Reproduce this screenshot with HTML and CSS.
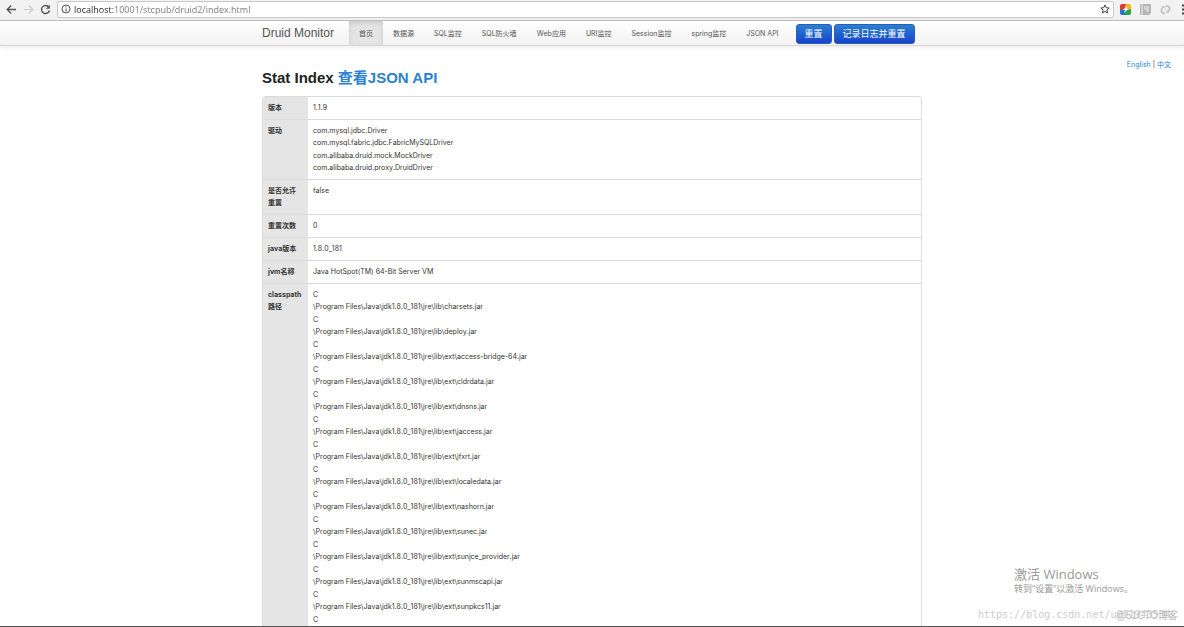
FILE: index.html
```html
<!DOCTYPE html>
<html lang="zh-CN">
<head>
<meta charset="utf-8">
<title>Druid Stat Index</title>
<link rel="stylesheet" href="styles.css">
</head>
<body>
<div class="browser">
  <button class="tool" type="button" aria-label="Back"><svg width="11" height="11" viewBox="0 0 11 11"><path d="M10 5.5H1.5M5.2 1.5l-4 4 4 4" fill="none" stroke="#555" stroke-width="1.4"/></svg></button>
  <button class="tool" type="button" aria-label="Forward"><svg width="11" height="11" viewBox="0 0 11 11"><path d="M1 5.5h8.5M5.8 1.5l4 4-4 4" fill="none" stroke="#ccc" stroke-width="1.2"/></svg></button>
  <button class="tool" type="button" aria-label="Reload"><svg width="11" height="11" viewBox="0 0 11 11"><path d="M8.8 3.2A4 4 0 1 0 9.4 6.5" fill="none" stroke="#555" stroke-width="1.4"/><path d="M9.8 .8v4H5.8z" fill="#555"/></svg></button>
  <div class="address">
    <svg width="10" height="10" viewBox="0 0 10 10"><circle cx="5" cy="5" r="4" fill="none" stroke="#555"/><path d="M5 4.5v3M5 2.4v1.2" stroke="#555" stroke-width="1.1"/></svg>
    <input class="url" type="text" aria-label="Address" value="localhost:10001/stcpub/druid2/index.html">
    <button class="star" type="button" aria-label="Bookmark"><svg width="10" height="10" viewBox="0 0 10 10"><path d="M5 .9l1.2 2.8 3 .3-2.3 2 .7 3L5 7.4 2.4 9l.7-3-2.3-2 3-.3z" fill="none" stroke="#444" stroke-width="1"/></svg></button>
  </div>
  <div class="extensions">
    <svg width="11" height="11" viewBox="0 0 11 11"><path d="M0 2q0-2 2-2h4L5 5 0 7z" fill="#e33a2b"/><path d="M6 0h3q2 0 2 2v4L6 4z" fill="#f6b913"/><path d="M0 6l5-1 1 6H2q-2 0-2-2z" fill="#2474d8"/><path d="M5 6l6-1v4q0 2-2 2H5z" fill="#2ba24c"/><path d="M7 2L3 6h2L4 9l4-4H6z" fill="#fff"/></svg>
    <svg width="11" height="11" viewBox="0 0 11 11"><path d="M0 0h11v9l-2 2H0z" fill="#b5b5b5"/><path d="M2 0v11M4 3h5M4 5h5M6 7h3" stroke="#eee"/></svg>
    <svg width="11" height="11" viewBox="0 0 11 11"><path d="M5 9.500C1 9 0 5 4 2.500M6 1.500c4 .5 5 4.500 1 7" fill="none" stroke="#c8c8c8" stroke-width="2"/><path d="M2 2.500h3v3M9 8.500H6.500v-3" fill="none" stroke="#c8c8c8"/></svg>
    <svg width="5" height="11" viewBox="0 0 5 11"><path d="M2 1.500h3M2 5.500h3M2 9.500h3" stroke="#444" stroke-width="2"/></svg>
  </div>
</div>
<header class="navbar">
  <div class="container bar">
    <a class="brand" href="#">Druid Monitor</a>
    <nav class="menu">
      <a class="item active" href="#">首页</a>
      <a class="item" href="#">数据源</a>
      <a class="item" href="#">SQL监控</a>
      <a class="item" href="#">SQL防火墙</a>
      <a class="item" href="#">Web应用</a>
      <a class="item" href="#">URI监控</a>
      <a class="item" href="#">Session监控</a>
      <a class="item" href="#">spring监控</a>
      <a class="item" href="#">JSON API</a>
    </nav>
    <div class="actions">
      <button class="btn" type="button">重置</button>
      <button class="btn" type="button">记录日志并重置</button>
    </div>
  </div>
</header>
<div class="languages"><a href="#">English</a> | <a href="#">中文</a></div>
<main class="container">
  <h1 class="title">Stat Index <a href="#">查看JSON API</a></h1>
  <table class="stats">
    <tbody>
      <tr><th scope="row">版本</th><td><p>1.1.9</p></td></tr>
      <tr><th scope="row">驱动</th><td><p>com.mysql.jdbc.Driver<br>com.mysql.fabric.jdbc.FabricMySQLDriver</p><p>com.alibaba.druid.mock.MockDriver<br>com.alibaba.druid.proxy.DruidDriver</p></td></tr>
      <tr><th scope="row"><p>是否允许<br>重置</p></th><td><p>false</p></td></tr>
      <tr><th scope="row">重置次数</th><td><p>0</p></td></tr>
      <tr><th scope="row">java版本</th><td><p>1.8.0_181</p></td></tr>
      <tr><th scope="row">jvm名称</th><td><p>Java HotSpot(TM) 64-Bit Server VM</p></td></tr>
      <tr><th scope="row">classpath<br>路径</th><td>
        <p>C<br>\Program Files\Java\jdk1.8.0_181\jre\lib\charsets.jar</p>
        <p>C<br>\Program Files\Java\jdk1.8.0_181\jre\lib\deploy.jar</p>
        <p>C<br>\Program Files\Java\jdk1.8.0_181\jre\lib\ext\access-bridge-64.jar</p>
        <p>C<br>\Program Files\Java\jdk1.8.0_181\jre\lib\ext\cldrdata.jar</p>
        <p>C<br>\Program Files\Java\jdk1.8.0_181\jre\lib\ext\dnsns.jar</p>
        <p>C<br>\Program Files\Java\jdk1.8.0_181\jre\lib\ext\jaccess.jar</p>
        <p>C<br>\Program Files\Java\jdk1.8.0_181\jre\lib\ext\jfxrt.jar</p>
        <p>C<br>\Program Files\Java\jdk1.8.0_181\jre\lib\ext\localedata.jar</p>
        <p>C<br>\Program Files\Java\jdk1.8.0_181\jre\lib\ext\nashorn.jar</p>
        <p>C<br>\Program Files\Java\jdk1.8.0_181\jre\lib\ext\sunec.jar</p>
        <p>C<br>\Program Files\Java\jdk1.8.0_181\jre\lib\ext\sunjce_provider.jar</p>
        <p>C<br>\Program Files\Java\jdk1.8.0_181\jre\lib\ext\sunmscapi.jar</p>
        <p>C<br>\Program Files\Java\jdk1.8.0_181\jre\lib\ext\sunpkcs11.jar</p>
        <p>C</p>
      </td></tr>
    </tbody>
  </table>
</main>
<div class="activation"><div class="activation-title">激活 Windows</div><div class="activation-text">转到“设置”以激活 Windows。</div></div>
<div class="blog-mark">https://blog.csdn.net/u011943534</div>
<div class="site-mark">@51CTO博客</div>
</body>
</html>
```
FILE: styles.css
```css
* { box-sizing: border-box; }
body {
  margin: 0;
  height: 100vh;
  overflow: hidden;
  display: flex;
  flex-direction: column;
  position: relative;
  background: #fff;
  border-bottom: 1px solid #555;
  color: #333;
  font: 7px/12px Inter, "Liberation Sans", "Noto Sans CJK SC", sans-serif;
  font-kerning: none;
}
a { color: #2a82d0; text-decoration: none; }
p { margin: 0; padding-bottom: 1px; }
svg { display: block; flex: none; }
button { font: inherit; border: 0; padding: 0; background: none; }

.browser {
  flex: none;
  display: flex;
  align-items: center;
  gap: 6px;
  height: 21px;
  padding: 0 0 2px 6px;
  background: #f2f2f2;
  border-bottom: 1px solid #c4c4c4;
}
.address {
  flex: 1;
  display: flex;
  align-items: center;
  gap: 3px;
  height: 17px;
  padding: 0 3px;
  background: #fff;
  border: 1px solid #c8c8c8;
  border-radius: 2px;
}
.url {
  flex: 1;
  min-width: 0;
  height: 15px;
  padding: 0;
  border: 0;
  font: 9px/15px "Open Sans", "Noto Sans", sans-serif;
  color: transparent;
  background: linear-gradient(90deg, #222 39px, #777 39px);
  -webkit-background-clip: text;
  background-clip: text;
}
.extensions { display: flex; align-items: center; gap: 9px; margin-right: -1px; }

.navbar {
  flex: none;
  height: 25px;
  background: linear-gradient(#fff, #f2f2f2);
  border-bottom: 1px solid #d8d8d8;
  box-shadow: 0 1px 5px rgba(0, 0, 0, .1);
}
.container { width: 100%; max-width: 660px; margin: 0 auto; }
.bar { display: flex; height: 24px; }
.brand {
  width: 87px;
  color: #555;
  font: 12px/25px "Liberation Sans", sans-serif;
}
.menu { display: flex; }
.item { padding: 0 10px; line-height: 25px; color: #555; white-space: nowrap; }
.active { background: #e5e5e5; box-shadow: inset 0 2px 5px rgba(0, 0, 0, .12); }
.actions { display: flex; gap: 2px; padding: 3px 0 0 7px; }
.btn {
  height: 20px;
  padding: 0 8px;
  border: 1px solid #2a5cb8;
  border-radius: 3px;
  background: linear-gradient(#2a80d0, #1743cc);
  color: #fff;
  font-size: 9px;
  line-height: 18px;
  white-space: nowrap;
}
.languages { flex: none; padding: 13px 13px 0; text-align: right; }

.title {
  margin: 0;
  padding-bottom: 11px;
  font: bold 15px/14px "Liberation Sans", "Noto Sans CJK SC", sans-serif;
  color: #222;
}
.stats {
  width: 100%;
  border: 1px solid #ddd;
  border-radius: 3px;
  border-spacing: 0;
  table-layout: fixed;
}
.stats th, .stats td {
  padding: 5px 5px 4px;
  border-bottom: 1px solid #ddd;
  text-align: left;
  vertical-align: top;
}
.stats th { width: 45px; background: #e5e5e5; white-space: nowrap; }

.activation {
  position: absolute;
  left: 1014px;
  bottom: 30px;
  color: #999;
  font-family: "Open Sans", "Noto Sans CJK SC", sans-serif;
}
.activation-title { font-size: 13px; line-height: 16px; }
.activation-text { font-size: 9px; line-height: 14px; }
.blog-mark {
  position: absolute;
  left: 978px;
  bottom: 5px;
  color: #ccc;
  font: 10px/13px "DejaVu Sans Mono", monospace;
}
.site-mark {
  position: absolute;
  right: 6px;
  bottom: 4px;
  color: #bbb;
  font: 10px/13px "Liberation Sans", "Noto Sans CJK SC", sans-serif;
}
```
